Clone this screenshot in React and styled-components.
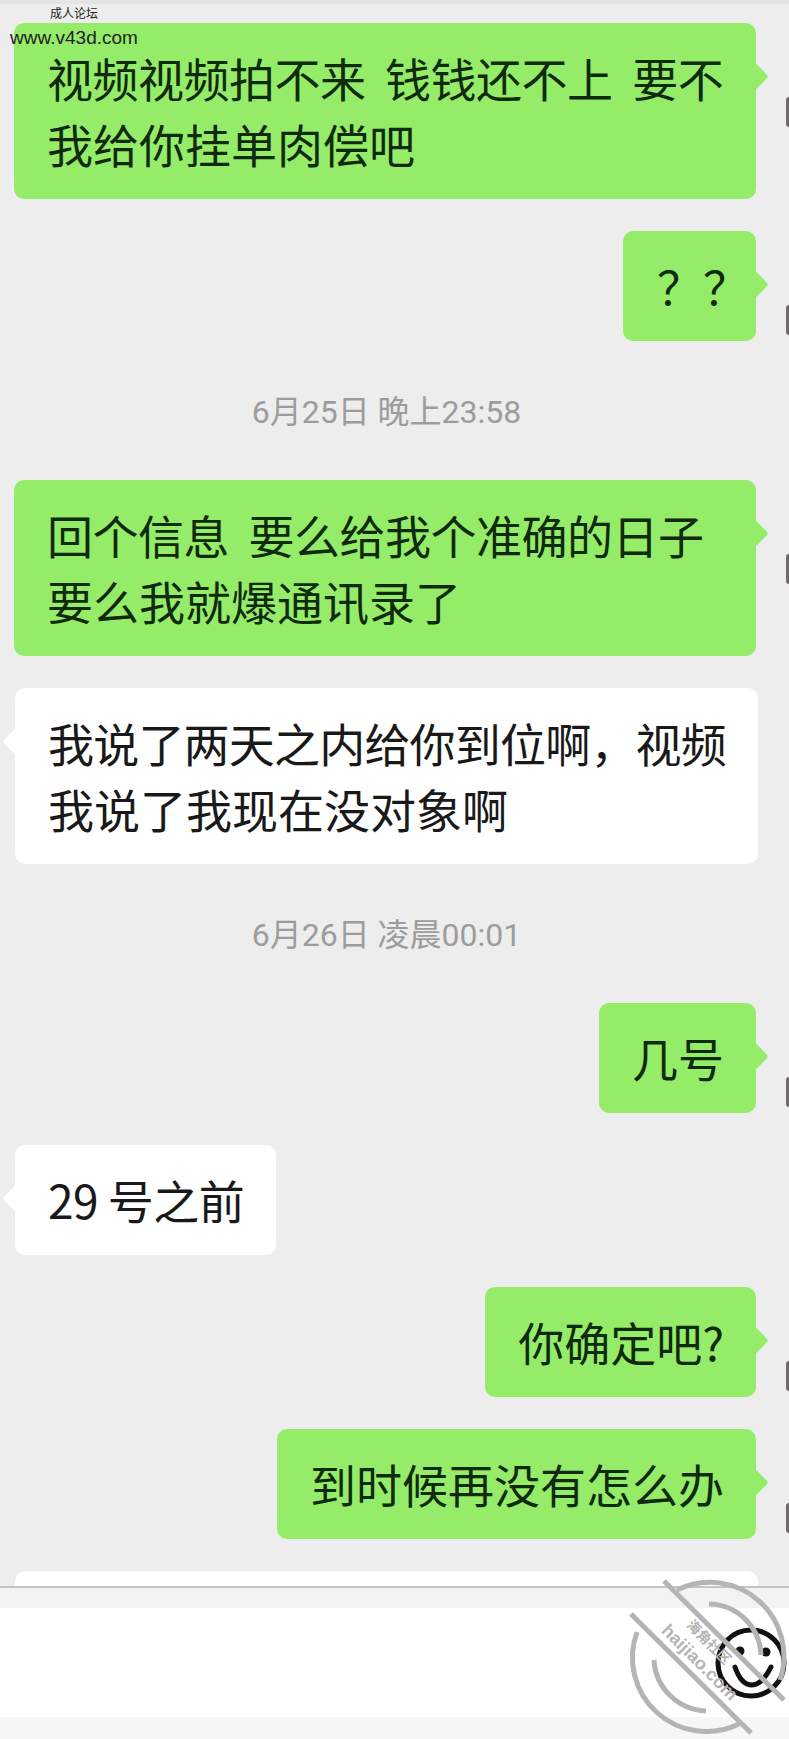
import React from 'react';
import styled, { createGlobalStyle } from 'styled-components';

const GlobalStyle = createGlobalStyle`
  html, body {
    margin: 0;
    padding: 0;
    background: #f7f7f7;
  }
  body {
    font-family: "Noto Sans CJK SC", "Liberation Sans", sans-serif;
  }
`;

const Screen = styled.div`
  position: relative;
  width: 789px;
  height: 1739px;
  overflow: hidden;
  display: flex;
  flex-direction: column;
  background: #ededed;
`;

const ChatArea = styled.div`
  height: 1588px;
  flex: none;
  overflow: hidden;
  box-sizing: border-box;
  padding: 19px 0 0;
  border-top: 4px solid #e4e4e4;
  border-bottom: 2px solid #c4c4c4;
  display: flex;
  flex-direction: column;
  align-items: flex-start;
`;

const Row = styled.div`
  position: relative;
  display: flex;
  flex: none;
  width: 100%;
  box-sizing: border-box;
  justify-content: ${p => (p.$mine ? 'flex-end' : 'flex-start')};
  padding: ${p => (p.$mine ? '0 33px 0 14px' : '0 31px 0 15px')};
  margin-bottom: 32px;
`;

const Bubble = styled.div`
  position: relative;
  box-sizing: border-box;
  width: ${p => (p.$full ? '100%' : 'auto')};
  padding: 21px ${p => (p.$snug ? '7px' : '32px')} 23px ${p => (p.$snug ? '34px' : '33px')};
  border-radius: 10px;
  background: ${p => (p.$mine ? '#95ec69' : '#ffffff')};
  color: ${p => (p.$mine ? '#0f2a0c' : '#191919')};
  font-size: 46px;
  line-height: 66px;
  white-space: pre;

  &::after {
    content: '';
    position: absolute;
    top: 42px;
    ${p => (p.$mine ? 'right: -8px;' : 'left: -8px;')}
    width: 23px;
    height: 23px;
    background: inherit;
    border-radius: 3px;
    transform: rotate(45deg);
  }
`;

const Line = styled.div`
  min-height: 66px;
  letter-spacing: ${p => p.$tracking || 0}px;
`;

const AvatarEdge = styled.div`
  position: absolute;
  right: 0;
  top: 74px;
  width: 3px;
  height: 30px;
  border-radius: 3px 0 0 3px;
  background: #6f6b69;
`;

const TimeStamp = styled.div`
  flex: none;
  width: 100%;
  box-sizing: border-box;
  height: 75px;
  margin-bottom: 32px;
  padding-right: 16px;
  text-align: center;
  font-family: Roboto, "Noto Sans CJK SC", sans-serif;
  font-size: 32px;
  line-height: 79px;
  color: #9c9c9c;
`;

const Footer = styled.div`
  flex: 1;
  display: flex;
  flex-direction: column;
  background: #f7f7f7;
`;

const FooterStrip = styled.div`
  height: 20px;
  flex: none;
  background: #f3f3f3;
`;

const InputBar = styled.div`
  height: 109px;
  flex: none;
  display: flex;
  align-items: center;
  justify-content: flex-end;
  background: #ffffff;
`;

const SmileIcon = styled.svg`
  width: 76px;
  height: 76px;
  display: block;
`;

const SiteMark = styled.div`
  position: absolute;
  top: 4px;
  left: 0;
  width: 148px;
  text-align: center;
  font-family: "Liberation Sans", "Noto Sans CJK SC", sans-serif;
  color: #222;
`;

const SiteName = styled.div`
  font-size: 12px;
  line-height: 20px;
`;

const SiteUrl = styled.div`
  font-size: 19px;
  line-height: 28px;
`;

const Stamp = styled.svg`
  position: absolute;
  left: 620px;
  top: 1570px;
  width: 169px;
  height: 169px;
  pointer-events: none;
`;

const StampLabel = styled.text`
  fill: #b4b4b4;
  font-weight: 700;
  font-family: ${p => (p.$cjk ? '"Noto Sans CJK SC"' : '"Liberation Sans"')}, sans-serif;
  font-size: ${p => p.$size}px;
`;

// tracking only squeezes the first line, the long ones run a bit narrower in the picture
function ChatBubble({ mine, full, snug, tracking, lines }) {
  return (
    <Row $mine={mine}>
      <Bubble $mine={mine} $full={full} $snug={snug}>
        {lines.map((text, i) => (
          <Line key={i} $tracking={i === 0 ? tracking : 0}>{text}</Line>
        ))}
      </Bubble>
      {mine && <AvatarEdge />}
    </Row>
  );
}

export default function App() {
  return (
    <Screen>
      <GlobalStyle />
      <ChatArea>
        <ChatBubble mine full tracking={-0.5} lines={['视频视频拍不来  钱钱还不上  要不', '我给你挂单肉偿吧']} />
        <ChatBubble mine snug lines={['？？']} />
        <TimeStamp>6月25日 晚上23:58</TimeStamp>
        <ChatBubble mine full tracking={-0.5} lines={['回个信息  要么给我个准确的日子', '要么我就爆通讯录了']} />
        <ChatBubble full tracking={-0.8} lines={['我说了两天之内给你到位啊，视频', '我说了我现在没对象啊']} />
        <TimeStamp>6月26日 凌晨00:01</TimeStamp>
        <ChatBubble mine lines={['几号']} />
        <ChatBubble tracking={-0.5} lines={['29 号之前']} />
        <ChatBubble mine lines={['你确定吧?']} />
        <ChatBubble mine lines={['到时候再没有怎么办']} />
        <ChatBubble full lines={['']} />
      </ChatArea>
      <Footer>
        <FooterStrip />
        <InputBar>
          <SmileIcon viewBox="0 0 76 76" fill="none" stroke="#111" strokeWidth="5" strokeLinecap="round">
            <circle cx="38" cy="38" r="33" />
            <circle cx="27" cy="26" r="4.5" fill="#111" stroke="none" />
            <circle cx="53" cy="27" r="4.5" fill="#111" stroke="none" />
            <path d="M22 42C26 54 32 60 39 60S52 54 58 42" />
          </SmileIcon>
        </InputBar>
      </Footer>
      <SiteMark>
        <SiteName>成人论坛</SiteName>
        <SiteUrl>www.v43d.com</SiteUrl>
      </SiteMark>
      <Stamp viewBox="620 1570 169 169" fill="none" stroke="#b4b4b4" strokeWidth="5" strokeLinecap="butt">
        <path d="M664 1581L784 1700" />
        <path d="M631 1614L751 1733" />
        <path d="M677 1590A74 74 0 0 1 780 1680" />
        <path d="M637 1632A74 74 0 0 0 739 1724" />
        <path d="M709 1604A53 53 0 0 1 761 1655" />
        <path d="M654 1660A54 54 0 0 0 706 1711" />
        <g stroke="none">
          <StampLabel $size={18} x="699" y="1668" textAnchor="middle" transform="rotate(45 699 1663)">
            haijiao.com
          </StampLabel>
          <StampLabel $cjk $size={14} x="709" y="1647" textAnchor="middle" transform="rotate(45 709 1642)">
            海角社区
          </StampLabel>
        </g>
      </Stamp>
    </Screen>
  );
}
